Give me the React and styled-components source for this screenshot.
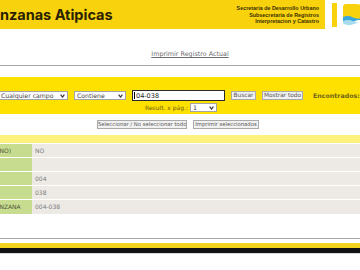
import React from 'react';
import styled, { createGlobalStyle } from 'styled-components';

const Global = createGlobalStyle`
  html, body { margin: 0; padding: 0; background: #fff; overflow: hidden; }
  body { font-family: "DejaVu Sans", Verdana, sans-serif; }
  * { box-sizing: border-box; }
`;

const Page = styled.div`
  width: 500px;
  margin-left: -60px;
`;

const Header = styled.header`
  display: flex;
  height: 29px;
`;

const Band = styled.div`
  width: 385px;
  background: #f8d20c;
  display: flex;
  align-items: center;
  justify-content: space-between;
  padding: 0 6px 0 38px;
`;

const Title = styled.h1`
  margin: 0;
  font-family: Inter, "Liberation Sans", sans-serif;
  font-weight: 700;
  font-size: 14.5px;
  color: #2a2100;
`;

const Agency = styled.div`
  text-align: right;
  font-family: "Liberation Sans", Arial, sans-serif;
  font-weight: 700;
  font-size: 5.4px;
  line-height: 6.6px;
  color: #3b3000;
  margin-top: 1px;
`;

const Stripe = styled.div`
  width: 5px;
  margin: 3px 0 2px 7px;
  background: #f8d20c;
`;

const Logo = styled.svg`
  margin: 4px 0 0 6px;
  flex: none;
`;

const PrintLink = styled.a`
  display: block;
  margin: 21px auto 0;
  width: max-content;
  font-size: 6.4px;
  line-height: 8px;
  color: #6d6d6d;
  text-decoration: underline;
`;

const Rule = styled.hr`
  margin: 7px 0 0;
  border: 0;
  border-top: 1px solid #a9a9a9;
`;

const SearchBand = styled.form`
  margin: 11px 0 0;
  background: #ffe100;
  padding: 13px 0 2px;
  display: flex;
  flex-direction: column;
  gap: 2px;
`;

const Row = styled.div`
  display: flex;
  align-items: center;
  height: ${p => p.$h}px;
  gap: 6px;
  padding-left: ${p => p.$indent}px;
`;

const SelectBox = styled.span`
  position: relative;
  display: inline-flex;
  width: ${p => p.$w}px;
  height: 9px;
`;

const Select = styled.select`
  appearance: none;
  width: 100%;
  height: 100%;
  margin: 0;
  border: 1px solid #a3a3a3;
  border-radius: 0;
  background: #fff;
  font-family: "DejaVu Sans", Verdana, sans-serif;
  font-size: 6.2px;
  color: #444;
  padding: 0 8px 0 2px;
  outline: none;
`;

const Chevron = styled.svg`
  position: absolute;
  right: 3px;
  top: 3px;
  pointer-events: none;
`;

const InputWrap = styled.span`
  position: relative;
  display: inline-flex;
  width: 93px;
  height: 11px;
`;

const TextInput = styled.input`
  width: 100%;
  height: 100%;
  margin: 0;
  border: 1px solid #2a2a2a;
  background: #fff;
  font-family: "DejaVu Sans", Verdana, sans-serif;
  font-size: 6.5px;
  color: #222;
  padding: 0 2px 0 3px;
  outline: none;
`;

const Caret = styled.span`
  position: absolute;
  left: 2px;
  top: 2px;
  width: 1px;
  height: 7px;
  background: #000;
`;

const Button = styled.button`
  width: ${p => p.$w}px;
  height: 9px;
  margin: 0;
  padding: 0;
  border: 1px solid #a9a9a9;
  border-radius: 0;
  background: #f1f1f1;
  font-family: "DejaVu Sans", Verdana, sans-serif;
  font-size: ${p => p.$fs || 5.8}px;
  line-height: 7px;
  color: #555;
  white-space: nowrap;
  overflow: hidden;
`;

const Found = styled.span`
  margin-left: 4px;
  font-size: 6.3px;
  font-weight: 700;
  color: #6e6418;
  white-space: nowrap;
`;

const PerPage = styled.span`
  font-size: 6px;
  color: #6b5e10;
  white-space: nowrap;
  margin-right: -4px;
`;

const Actions = styled.div`
  display: flex;
  gap: 6px;
  padding: 6px 0 6px 157px;
`;

const PaleStrip = styled.div`
  height: 8px;
  background: #fff27c;
`;

const Table = styled.table`
  margin-left: 16px;
  width: 484px;
  border-collapse: collapse;
  font-size: 6px;
  text-transform: uppercase;
`;

const Cell = styled.td`
  height: 14px;
  padding: 0 0 0 ${p => (p.$label ? 5 : 3)}px;
  border-top: 1px solid #fff;
  white-space: nowrap;
  overflow: hidden;
  background: ${p => (p.$label ? '#c8dc90' : '#edeae6')};
  color: ${p => (p.$label ? '#4e5535' : '#7a7a7a')};
  width: ${p => (p.$label ? '76px' : 'auto')};
  max-width: ${p => (p.$label ? '76px' : 'none')};
`;

const Footer = styled.footer`
  margin-top: 24px;
  border-top: 1px solid #a8a8a8;
  padding-top: 4px;
`;

const FooterBar = styled.div`
  height: ${p => p.$h || 5}px;
  background: ${p => p.$c};
`;

const rows = [
  ['ATIPICA (SI / NO)', 'NO'],
  ['ZONA', ''],
  ['SECCION', '004'],
  ['MANZANA', '038'],
  ['SECCION-MANZANA', '004-038'],
];

const Arrow = () => (
  <Chevron width="5" height="4" viewBox="0 0 5 4">
    <path d="M0.6 0.6 L2.5 3 L4.4 0.6" fill="none" stroke="#333" strokeWidth="1.2" />
  </Chevron>
);

const Dropdown = ({ w, value, options }) => (
  <SelectBox $w={w}>
    <Select defaultValue={value}>
      {options.map(o => <option key={o}>{o}</option>)}
    </Select>
    <Arrow />
  </SelectBox>
);

export default function App() {
  return (
    <Page>
      <Global />
      <Header>
        <Band>
          <Title>Manzanas Atipicas</Title>
          <Agency>
            Secretaria de Desarrollo Urbano<br />
            Subsecretaria de Registros<br />
            Interpretacion y Catastro
          </Agency>
        </Band>
        <Stripe />
        <Logo width="22" height="22" viewBox="0 0 22 22">
          <path d="M0 3 Q0 0 3 0 H13 Q22 0 22 9 V16 H0 Z" fill="#f8d20c" />
          <path d="M0 13 Q5 11 10 13.5 T22 13 V17 Q16 15 11 17.5 T0 17 Z" fill="#3aa6da" />
          <path d="M0 17 Q5 15 11 17.5 T22 17 V19 Q16 17.5 11 20 T0 19.5 Z" fill="#a7dcef" />
        </Logo>
      </Header>

      <PrintLink href="#">Imprimir Registro Actual</PrintLink>
      <Rule />

      <SearchBand onSubmit={e => e.preventDefault()}>
        <Row $h={11} $indent={58}>
          <Dropdown w={70} value="Cualquier campo" options={['Cualquier campo']} />
          <Dropdown w={52} value="Contiene" options={['Contiene']} />
          <InputWrap>
            <TextInput defaultValue="04-038" />
            <Caret />
          </InputWrap>
          <Button $w={25}>Buscar</Button>
          <Button $w={41}>Mostrar todo</Button>
          <Found>Encontrados: 1</Found>
        </Row>
        <Row $h={9} $indent={205}>
          <PerPage>Result. x pág.:</PerPage>
          <Dropdown w={27} value="1" options={['1']} />
        </Row>
      </SearchBand>

      <Actions>
        <Button $w={90} $fs={5.3}>Seleccionar / No seleccionar todo</Button>
        <Button $w={66} $fs={5.3}>Imprimir seleccionados</Button>
      </Actions>
      <PaleStrip />

      <Table>
        <tbody>
          {rows.map(([label, value]) => (
            <tr key={label}>
              <Cell $label>{label}</Cell>
              <Cell>{value}</Cell>
            </tr>
          ))}
        </tbody>
      </Table>

      <Footer>
        <FooterBar $c="#f2d41e" />
        <FooterBar $c="#111" />
        <FooterBar $c="#d3dde2" $h={1} />
      </Footer>
    </Page>
  );
}
